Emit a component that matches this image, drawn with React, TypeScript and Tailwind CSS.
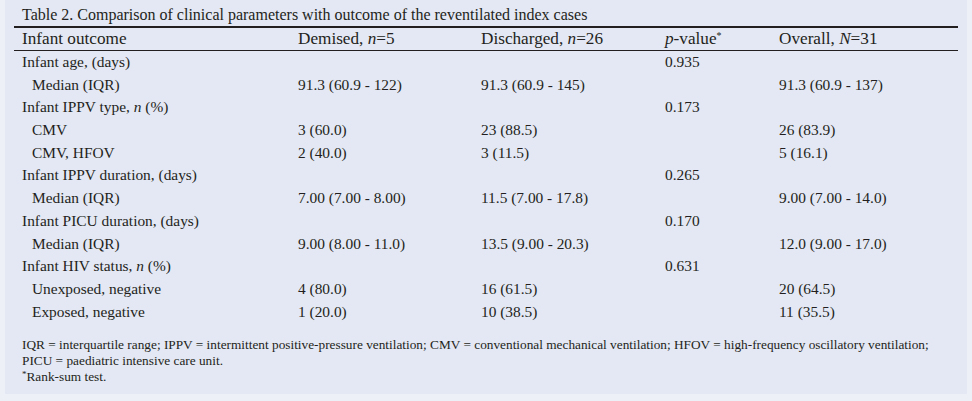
const rows: { label: string; sub?: boolean; italic?: string; d?: string; c?: string; p?: string; o?: string }[] = [
  { label: "Infant age, (days)", p: "0.935" },
  { label: "Median (IQR)", sub: true, d: "91.3 (60.9 - 122)", c: "91.3 (60.9 - 145)", o: "91.3 (60.9 - 137)" },
  { label: "Infant IPPV type, ", italic: "n", p: "0.173" },
  { label: "CMV", sub: true, d: "3 (60.0)", c: "23 (88.5)", o: "26 (83.9)" },
  { label: "CMV, HFOV", sub: true, d: "2 (40.0)", c: "3 (11.5)", o: "5 (16.1)" },
  { label: "Infant IPPV duration, (days)", p: "0.265" },
  { label: "Median (IQR)", sub: true, d: "7.00 (7.00 - 8.00)", c: "11.5 (7.00 - 17.8)", o: "9.00 (7.00 - 14.0)" },
  { label: "Infant PICU duration, (days)", p: "0.170" },
  { label: "Median (IQR)", sub: true, d: "9.00 (8.00 - 11.0)", c: "13.5 (9.00 - 20.3)", o: "12.0 (9.00 - 17.0)" },
  { label: "Infant HIV status, ", italic: "n", p: "0.631" },
  { label: "Unexposed, negative", sub: true, d: "4 (80.0)", c: "16 (61.5)", o: "20 (64.5)" },
  { label: "Exposed, negative", sub: true, d: "1 (20.0)", c: "10 (38.5)", o: "11 (35.5)" },
];

const grid = "grid grid-cols-[276px_183px_184px_114px_1fr] pl-2 whitespace-nowrap";

export default function App() {
  return (
    <div className="h-[401px] w-[972px] bg-[#eef0f8] px-[5px] pb-[7px] text-[#231f20] [font-family:'Liberation_Serif',serif]">
      <div className="h-full bg-[#e4e8f4] px-[9px]">
        <div className="w-[944px]">
          <div className="pl-2 pt-[3px] text-[16px] leading-[23px] whitespace-nowrap">
            Table 2. Comparison of clinical parameters with outcome of the reventilated index cases
          </div>
          <div className="h-[2px] bg-[#231f20]" />
          <div className={`${grid} h-[22px] items-center text-[17.2px] leading-[22px]`}>
            <div>Infant outcome</div>
            <div>
              Demised, <i>n</i>=5
            </div>
            <div>
              Discharged, <i>n</i>=26
            </div>
            <div>
              <i>p</i>-value<sup className="text-[10px]">*</sup>
            </div>
            <div>
              Overall, <i>N</i>=31
            </div>
          </div>
          <div className="h-px bg-[#231f20]" />
          <div className="text-[15.4px]">
            {rows.map((r, i) => (
              <div key={i} className={`${grid} h-[22.7px] items-center leading-[22.7px]`}>
                <div className={r.sub ? "pl-[10px]" : ""}>
                  {r.label}
                  {r.italic && (
                    <>
                      <i>{r.italic}</i> (%)
                    </>
                  )}
                </div>
                <div>{r.d}</div>
                <div>{r.c}</div>
                <div>{r.p}</div>
                <div>{r.o}</div>
              </div>
            ))}
          </div>
          <div className="pl-2 pt-[14px] text-[13.3px] leading-[16px] whitespace-nowrap">
            <div>
              IQR = interquartile range; IPPV = intermittent positive-pressure ventilation; CMV = conventional mechanical ventilation; HFOV = high-frequency oscillatory ventilation;
            </div>
            <div>PICU = paediatric intensive care unit.</div>
            <div>
              <sup className="text-[9px]">*</sup>Rank-sum test.
            </div>
          </div>
        </div>
      </div>
    </div>
  );
}
